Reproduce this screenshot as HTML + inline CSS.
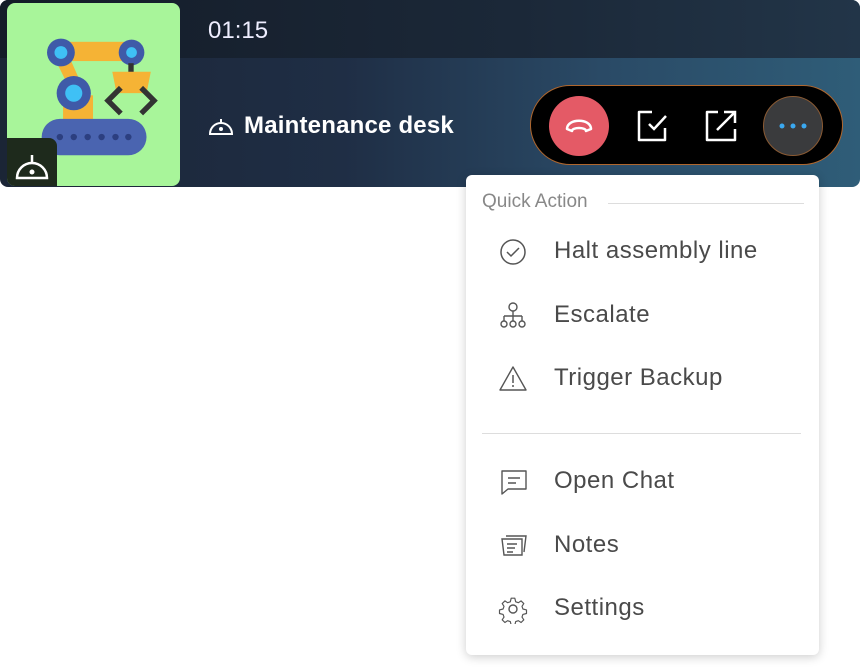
<!DOCTYPE html>
<html><head><style>
*{margin:0;padding:0;box-sizing:border-box}
body{width:860px;height:667px;background:#fff;position:relative;overflow:hidden;font-family:"Liberation Sans",sans-serif}
.hdr{position:absolute;left:0;top:0;width:860px;height:187px;border-radius:8px;overflow:hidden;background:linear-gradient(90deg,#1b2536 0%,#1f2e45 40%,#2a4a66 70%,#2f5d78 100%)}
.hdr .top{position:absolute;left:0;top:0;width:100%;height:58px;background:linear-gradient(90deg,#141c28,#1b2838 60%,#223548)}
.thumb{position:absolute;left:7px;top:3px;width:173px;height:183px;background:#a8f59a;border-radius:8px;overflow:hidden}
.corner{position:absolute;left:0;top:135px;width:50px;height:48px;background:#1e2a1c;border-top-right-radius:8px}
.time{position:absolute;left:208px;top:17px;color:#eef;font-size:24px}
.name{position:absolute;left:244px;top:112px;color:#fff;font-size:24px;font-weight:bold;letter-spacing:.2px}
.pill{position:absolute;left:530px;top:85px;width:313px;height:80px;background:#000;border:1.5px solid #b0672e;border-radius:40px}
.red{position:absolute;left:18px;top:10px;width:60px;height:60px;border-radius:50%;background:#e45a66}
.more{position:absolute;left:232px;top:10px;width:60px;height:60px;border-radius:50%;background:#3a3b3d;border:1px solid #8a5a33}
.menu{position:absolute;left:466px;top:175px;width:353px;height:480px;background:#fff;border-radius:6px;box-shadow:0 2px 10px rgba(0,0,0,.2)}
.qa{position:absolute;left:16px;top:16px;color:#888;font-size:19px}
.line{position:absolute;height:1px;background:#ddd}
.it{position:absolute;left:88px;color:#4a4a4a;font-size:24px;letter-spacing:.5px}
.ic{position:absolute;left:32px}
</style></head><body>
<div class="hdr"><div class="top"></div>
<div class="thumb">
<svg width="173" height="183" viewBox="0 0 173 183">
<g transform="translate(-6 -4) scale(1.07)">
<rect x="50" y="40" width="78" height="18" fill="#f5b335"/>
<path d="M50 55 L72 100 L82 95 L62 50Z" fill="#f5b335"/>
<rect x="58" y="90" width="28" height="30" fill="#f5b335"/>
<circle cx="56" cy="50" r="13" fill="#3f5aa8"/><circle cx="56" cy="50" r="6" fill="#3fc0f5"/>
<circle cx="122" cy="50" r="12" fill="#3f5aa8"/><circle cx="122" cy="50" r="5" fill="#3fc0f5"/>
<rect x="119" y="60" width="5" height="10" fill="#333"/>
<path d="M104 68h36l-4 20h-28z" fill="#f5b335"/>
<path d="M112 83l-12 12 12 12M131 83l12 12-12 12" stroke="#333" stroke-width="5" fill="none"/>
<circle cx="68" cy="88" r="16" fill="#3f5aa8"/><circle cx="68" cy="88" r="8" fill="#3fc0f5"/>
<rect x="38" y="112" width="98" height="34" rx="17" fill="#4a64b0"/>
<g fill="#2c3f80"><circle cx="55" cy="129" r="3"/><circle cx="68" cy="129" r="3"/><circle cx="81" cy="129" r="3"/><circle cx="94" cy="129" r="3"/><circle cx="107" cy="129" r="3"/><circle cx="119" cy="129" r="3"/></g>
</g>
</svg>
<div class="corner"><svg width="50" height="48"><path d="M10 40 A15 15 0 0 1 40 40 Z" fill="none" stroke="#fff" stroke-width="2.5"/><line x1="25" y1="17" x2="25" y2="24" stroke="#fff" stroke-width="2.5"/><circle cx="25" cy="34" r="2.5" fill="#fff"/></svg></div>
</div>
<div class="time">01:15</div>
<svg style="position:absolute;left:207px;top:113px" width="28" height="24"><path d="M3 21 A11 11 0 0 1 25 21 Z" fill="none" stroke="#fff" stroke-width="2"/><line x1="14" y1="6" x2="14" y2="10" stroke="#fff" stroke-width="2"/><circle cx="14" cy="16" r="2" fill="#fff"/></svg>
<div class="name">Maintenance desk</div>
<div class="pill">
<div class="red"><svg width="60" height="60"><path d="M18 33 C18 22 42 22 42 33 L37 35 C37 31 23 31 23 35 Z" fill="none" stroke="#fff" stroke-width="2.5" stroke-linejoin="round"/></svg></div>
<svg style="position:absolute;left:104px;top:22px" width="36" height="36"><path d="M17 4H4v28h26V20" fill="none" stroke="#fff" stroke-width="2.5" stroke-linejoin="round"/><path d="M14 16l5 5 12-13" fill="none" stroke="#fff" stroke-width="2.5"/></svg>
<svg style="position:absolute;left:172px;top:22px" width="36" height="36"><path d="M15 4H4v28h28V21" fill="none" stroke="#fff" stroke-width="2.5" stroke-linejoin="round"/><path d="M14 22L32 4M21 4h11v11" fill="none" stroke="#fff" stroke-width="2.5"/></svg>
<div class="more"><svg width="58" height="58"><g fill="#3aa8f0"><circle cx="18" cy="29" r="2.5"/><circle cx="29" cy="29" r="2.5"/><circle cx="40" cy="29" r="2.5"/></g></svg></div>
</div>
</div>
<div class="menu">
<div class="qa">Quick Action</div>
<div class="line" style="left:142px;top:28px;width:196px"></div>
<svg class="ic" style="top:62px" width="30" height="30"><circle cx="15" cy="15" r="12" fill="none" stroke="#555" stroke-width="1.5"/><path d="M9 15l4 4 8-8" fill="none" stroke="#555" stroke-width="1.5"/></svg>
<div class="it" style="top:62px">Halt assembly line</div>
<svg class="ic" style="top:126px" width="30" height="30"><circle cx="15" cy="6" r="4" fill="none" stroke="#555" stroke-width="1.4"/><path d="M15 10v5M6 15h18M6 15v5M15 15v5M24 15v5" fill="none" stroke="#555" stroke-width="1.4"/><circle cx="6" cy="23" r="3" fill="none" stroke="#555" stroke-width="1.4"/><circle cx="15" cy="23" r="3" fill="none" stroke="#555" stroke-width="1.4"/><circle cx="24" cy="23" r="3" fill="none" stroke="#555" stroke-width="1.4"/></svg>
<div class="it" style="top:126px">Escalate</div>
<svg class="ic" style="top:189px" width="30" height="30"><path d="M15 3L28 26H2Z" fill="none" stroke="#555" stroke-width="1.4" stroke-linejoin="round"/><path d="M15 11v8" stroke="#555" stroke-width="1.5"/><circle cx="15" cy="22" r="1" fill="#555"/></svg>
<div class="it" style="top:189px">Trigger Backup</div>
<div class="line" style="left:16px;top:258px;width:319px"></div>
<svg class="ic" style="top:292px" width="30" height="30"><path d="M4 4h24v18H10l-6 5Z" fill="none" stroke="#555" stroke-width="1.4" stroke-linejoin="round"/><path d="M10 11h12M10 16h8" stroke="#555" stroke-width="1.4"/></svg>
<div class="it" style="top:292px">Open Chat</div>
<svg class="ic" style="top:356px" width="30" height="30"><path d="M4 8h20v16H6Z" fill="none" stroke="#555" stroke-width="1.4"/><path d="M8 5h20l-2 16" fill="none" stroke="#555" stroke-width="1.4"/><path d="M9 13h10M9 17h8M9 21h6" stroke="#555" stroke-width="1.4"/></svg>
<div class="it" style="top:356px">Notes</div>
<svg class="ic" style="top:419px" width="30" height="30"><circle cx="15" cy="15" r="4" fill="none" stroke="#555" stroke-width="1.4"/><path d="M13 3h4l1 4 3 1 3-2 3 3-2 3 1 3 4 1v4l-4 1-1 3 2 3-3 3-3-2-3 1-1 4h-4l-1-4-3-1-3 2-3-3 2-3-1-3-4-1v-4l4-1 1-3-2-3 3-3 3 2 3-1Z" fill="none" stroke="#555" stroke-width="1.3" stroke-linejoin="round" transform="translate(1.5 1.5) scale(.9)"/></svg>
<div class="it" style="top:419px">Settings</div>
</div>
</body></html>
